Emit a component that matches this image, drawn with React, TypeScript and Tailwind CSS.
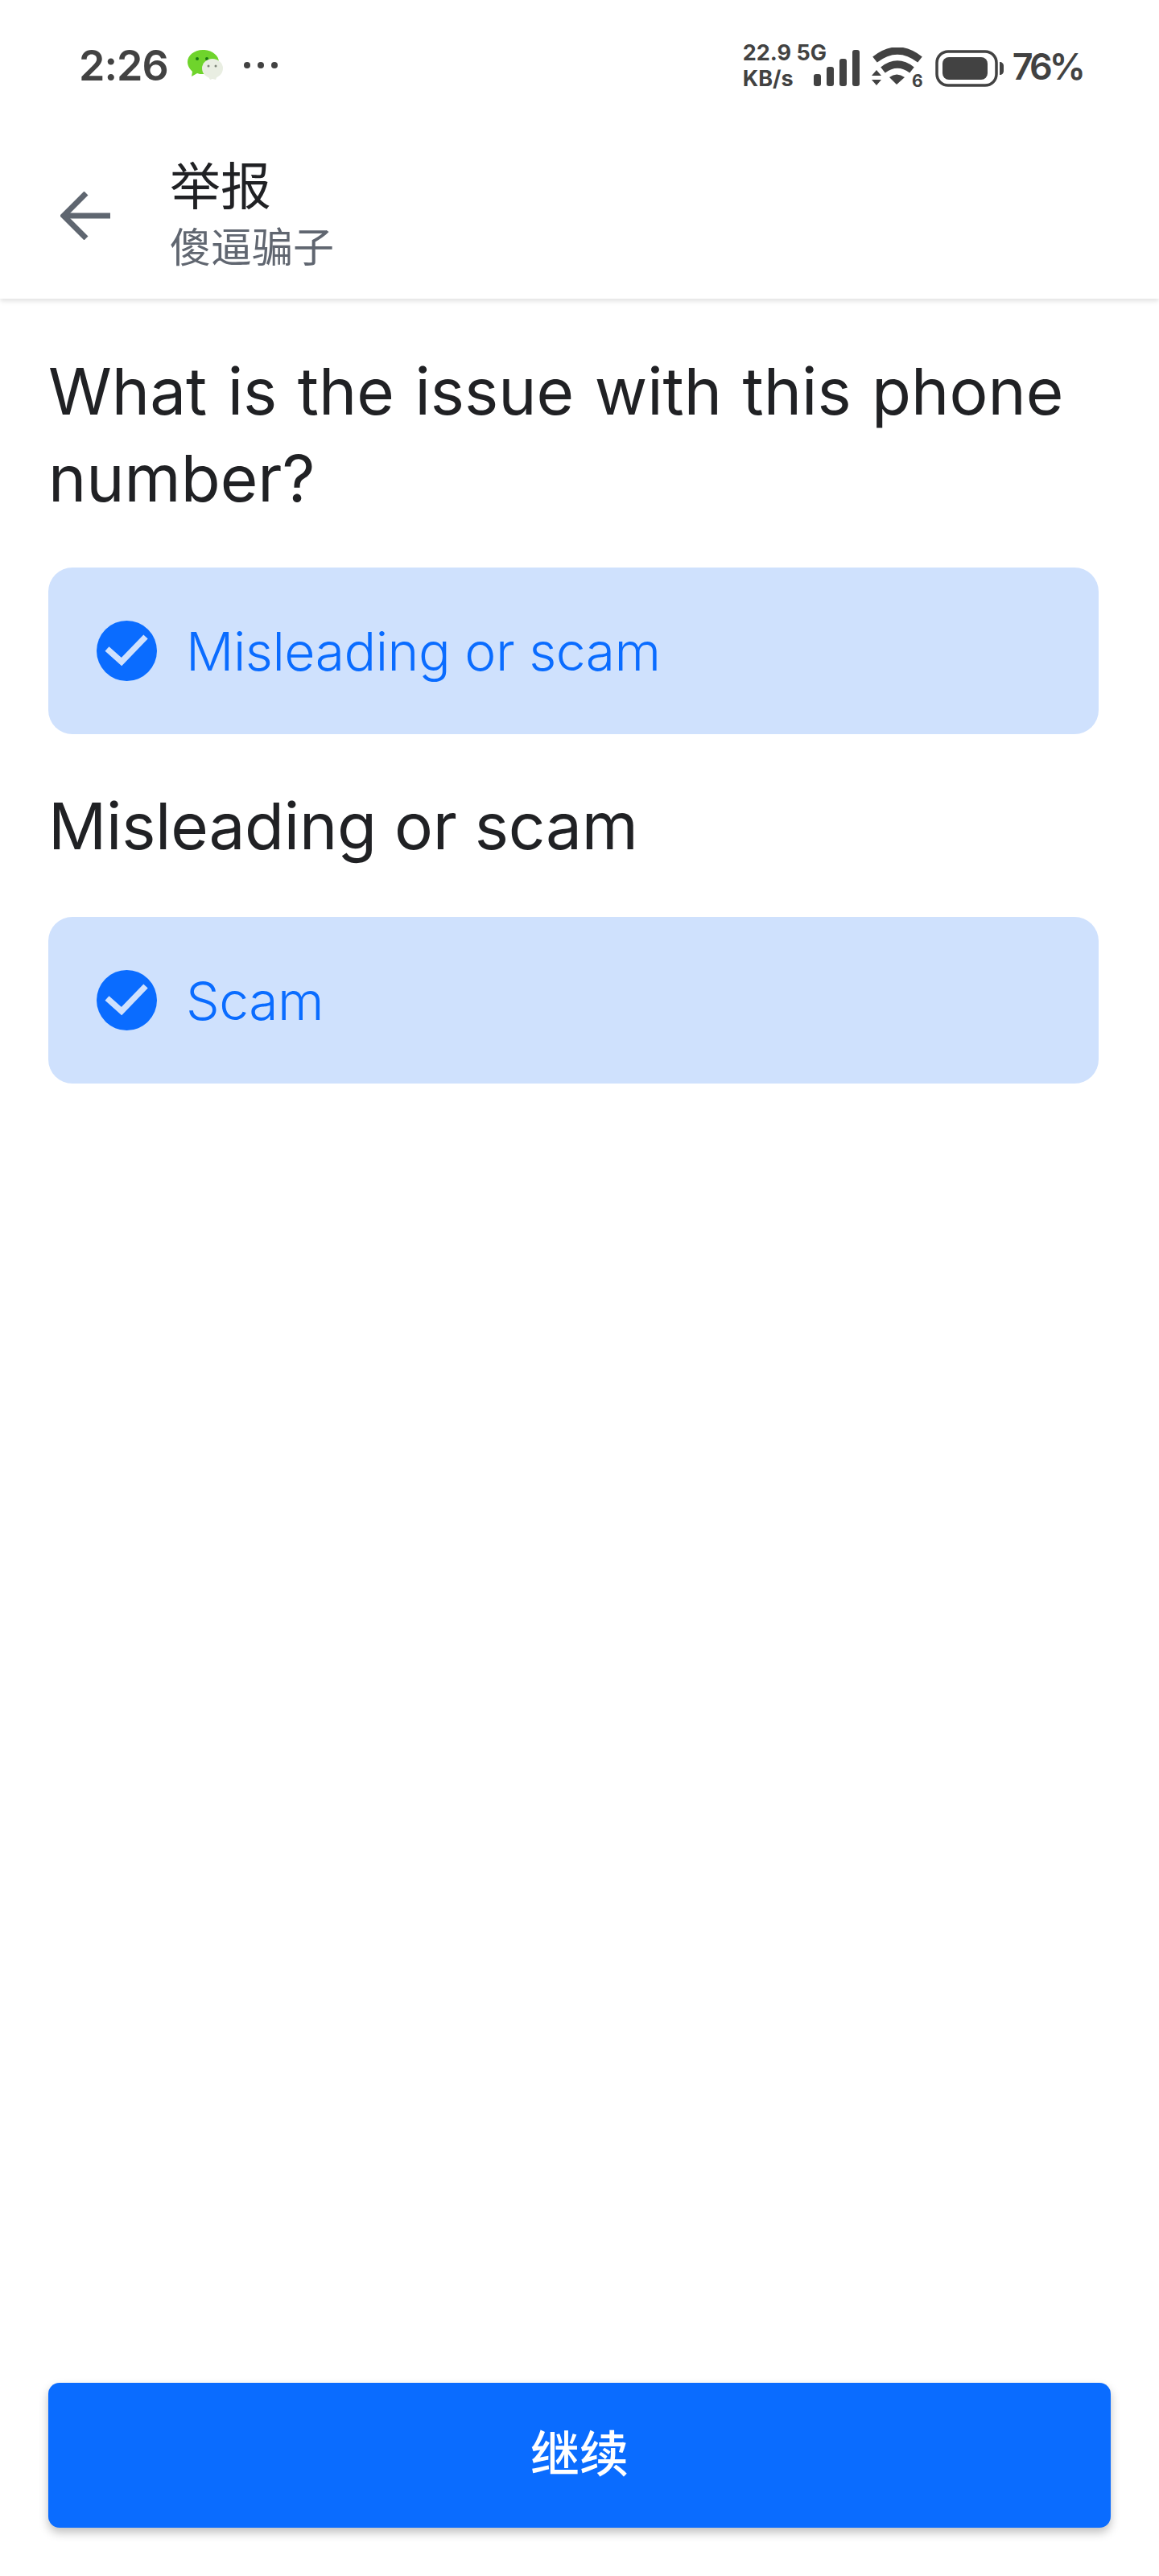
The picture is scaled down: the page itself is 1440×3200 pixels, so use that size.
function WeChatIcon() {
  return (
    <svg width="46" height="38" viewBox="0 0 46 38">
      <path d="M20 0C9 0 1 7 1 15c0 5 3 9 6 12l-1 6 7-4c2 1 5 1 7 1 11 0 20-7 20-15S31 0 20 0z" fill="#6fd42c" />
      <circle cx="13" cy="11" r="2" fill="#1b7a12" />
      <circle cx="25" cy="11" r="2" fill="#1b7a12" />
      <ellipse cx="32" cy="23" rx="13" ry="12" fill="#e9eee2" />
      <path d="M26 32h12l-2 5-4-1-3 1z" fill="#e9eee2" />
      <circle cx="27" cy="20" r="1.5" fill="#7d8579" />
      <circle cx="36" cy="20" r="1.5" fill="#7d8579" />
    </svg>
  );
}

function SignalIcon() {
  return (
    <svg width="58" height="46" viewBox="0 0 58 46" fill="#424242">
      <rect x="0" y="30" width="9" height="15" rx="3" />
      <rect x="16" y="21" width="9" height="24" rx="3" />
      <rect x="32" y="11" width="9" height="34" rx="3" />
      <rect x="48" y="0" width="9" height="45" rx="3" />
    </svg>
  );
}

function WifiIcon() {
  return (
    <svg width="64" height="55" viewBox="0 0 64 55" fill="#424242">
      <path d="M4 15Q32 -7 60 15" fill="none" stroke="#424242" strokeWidth="9" />
      <path d="M14 28Q32 14 50 28" fill="none" stroke="#424242" strokeWidth="9" />
      <path d="M22 37Q31 30 41 37L31 46z" />
      <path d="M0 35L6 28 12 35z" />
      <path d="M0 40L12 40 6 47z" />
      <text x="50" y="49" fontSize="21" fontWeight="700" fontFamily="Inter, sans-serif">6</text>
    </svg>
  );
}

function BatteryIcon() {
  return (
    <svg width="86" height="46" viewBox="0 0 86 46" fill="#424242">
      <rect x="2" y="2" width="74" height="42" rx="14" fill="none" stroke="#424242" strokeWidth="3.5" />
      <rect x="9" y="9" width="56" height="28" rx="8" />
      <path d="M80 15c3 0 5 2 5 5v6c0 3-2 5-5 5z" />
    </svg>
  );
}

function CheckBadge() {
  return (
    <svg width="75" height="75" viewBox="0 0 75 75" className="shrink-0">
      <circle cx="37.5" cy="37.5" r="37.5" fill="#0a6cff" />
      <path d="M13 35L31 51L61 20" fill="none" stroke="#cfe1fd" strokeWidth="7.5" />
    </svg>
  );
}

function OptionCard({ label }: { label: string }) {
  return (
    <div className="flex h-[207px] w-[1305px] items-center gap-[36px] rounded-[30px] bg-[#cfe1fd] pl-[60px]">
      <CheckBadge />
      <span className="text-[66px] leading-none font-light tracking-[-0.5px] text-[#0a6cff]">{label}</span>
    </div>
  );
}

export default function App() {
  return (
    <div className="flex h-[3200px] w-[1440px] flex-col overflow-hidden bg-white font-['Inter','Noto_Sans_CJK_SC',sans-serif]">
      {/* Status bar */}
      <div className="relative z-10 flex h-[164px] items-start justify-between bg-white pt-[50px] pr-[95px] pl-[98px] text-[#424242]">
        <div className="flex items-center">
          <span className="mt-[2px] text-[52px] leading-[60px] font-semibold tracking-[-1px]">2:26</span>
          <div className="ml-[23px]">
            <WeChatIcon />
          </div>
          <div className="ml-[25px] flex gap-[9px]">
            <span className="h-[8px] w-[8px] rounded-full bg-[#424242]" />
            <span className="h-[8px] w-[8px] rounded-full bg-[#424242]" />
            <span className="h-[8px] w-[8px] rounded-full bg-[#424242]" />
          </div>
        </div>
        <div className="flex items-center">
          <div className="flex w-[104px] flex-col text-[27px] leading-[32px] font-bold">
            <span className="whitespace-nowrap">22.9 5G</span>
            <span>KB/s</span>
          </div>
          <div className="ml-[-16px] mt-[6px]">
            <SignalIcon />
          </div>
          <div className="ml-[14px] mt-[9px]">
            <WifiIcon />
          </div>
          <div className="ml-[15px] mt-[6px]">
            <BatteryIcon />
          </div>
          <span className="ml-[10px] text-[45px] leading-none font-semibold tracking-[-4px]">76%</span>
        </div>
      </div>

      {/* Header */}
      <div className="flex h-[207px] items-center bg-white pl-[75px] shadow-[0_3px_6px_rgba(0,0,0,0.12)]">
        <svg width="62" height="60" viewBox="0 0 62 60" fill="none" stroke="#5f6670" strokeWidth="7">
          <path d="M62 30H5" />
          <path d="M32 2L4 30L32 58" />
        </svg>
        <div className="mb-[4px] ml-[74px] flex flex-col gap-[9px]">
          <span className="text-[63px] leading-[76px] text-[#202124]">举报</span>
          <span className="text-[51px] leading-[60px] text-[#606670]">傻逼骗子</span>
        </div>
      </div>

      {/* Body */}
      <div className="flex flex-1 flex-col pl-[60px]">
        <h1 className="mt-[61px] w-[1320px] text-[80px] leading-[108px] font-normal text-[#202124] [word-spacing:3px]">
          What is the issue with this phone number?
        </h1>
        <div className="mt-[57px]">
          <OptionCard label="Misleading or scam" />
        </div>
        <h2 className="mt-[60px] text-[80px] leading-[108px] font-normal tracking-[-0.25px] text-[#202124]">Misleading or scam</h2>
        <div className="mt-[59px]">
          <OptionCard label="Scam" />
        </div>
      </div>

      {/* Continue button */}
      <div className="h-[240px] pl-[60px]">
        <button className="flex h-[180px] w-[1320px] items-center justify-center rounded-[14px] bg-[#0a6cff] text-[61px] font-medium text-white shadow-[0_6px_12px_rgba(0,0,0,0.25)]">
          继续
        </button>
      </div>
    </div>
  );
}
